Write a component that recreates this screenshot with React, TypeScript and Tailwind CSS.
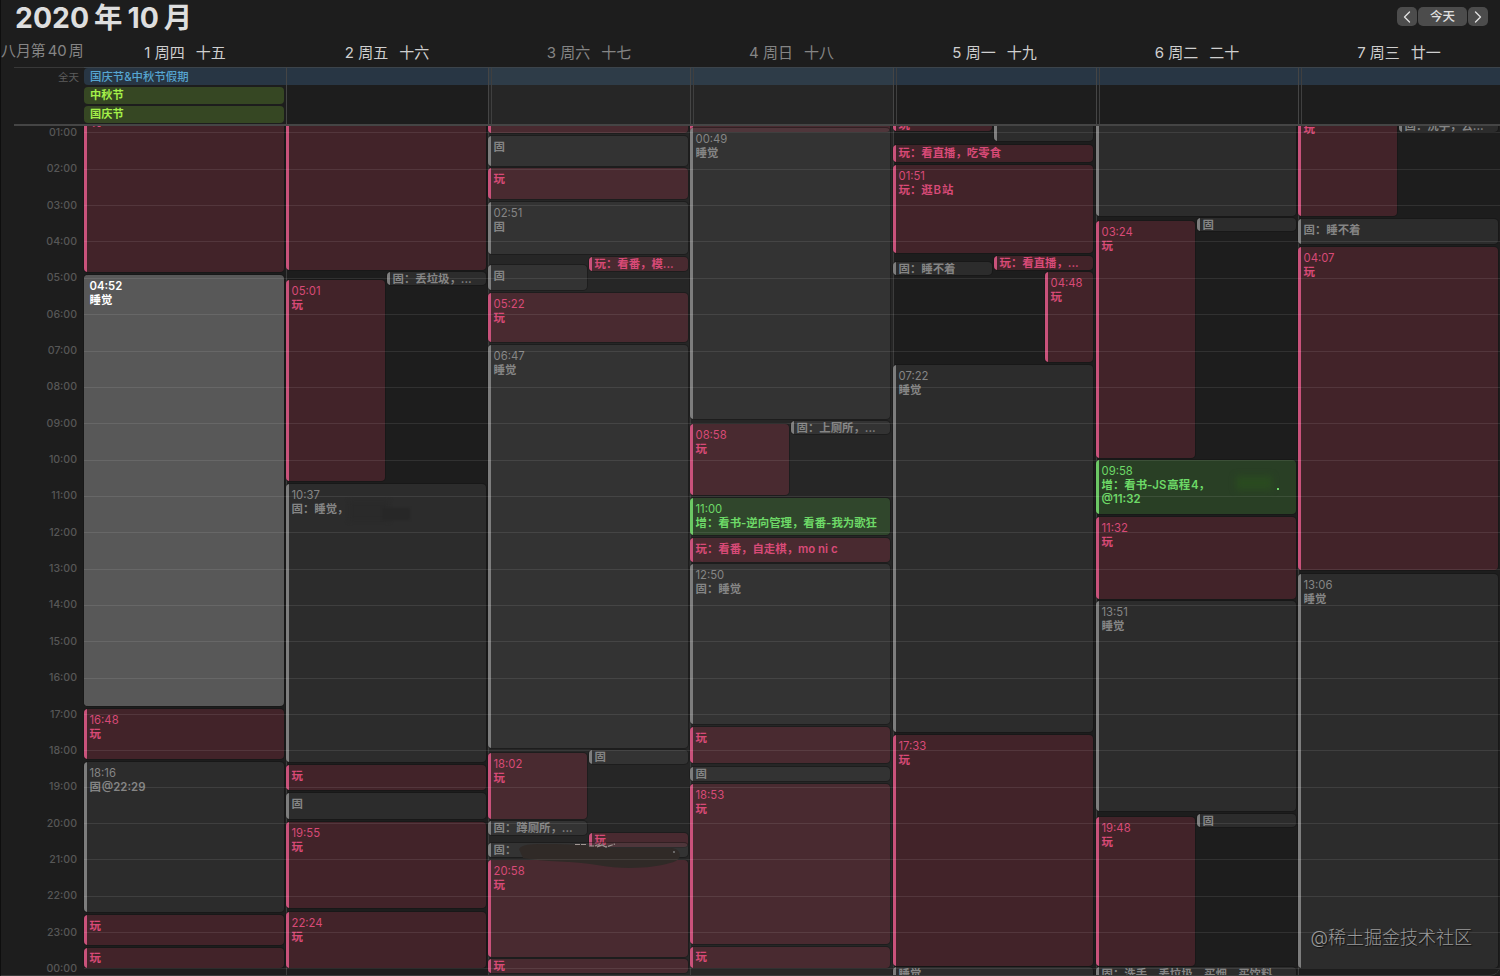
import clsx from "clsx";
import { ChevronLeft, ChevronRight } from "lucide-react";

type Kind = "play" | "fixed" | "grow" | "selected";

interface CalendarEvent {
  kind: Kind;
  top: number;
  bottom: number;
  time?: string;
  title?: string;
  extra?: string;
  left?: number;
  width?: number;
}

interface Day {
  label: string;
  lunar: string;
  weekend?: boolean;
  events: CalendarEvent[];
}

const HOUR_HEIGHT = 36.35;
const FIRST_HOUR_TOP = 6.4;

const LEFT = { left: 0, width: 99 };
const RIGHT = { left: 101, width: 99 };

const COLUMNS = "grid grid-cols-[84px_202px_202px_202px_203px_203px_202px_202px]";

const kindStyles: Record<Kind, { box: string; bar: string; text: string }> = {
  play: { box: "bg-[#c83c55]/22", bar: "bg-[#c9527b]", text: "text-[#d84a77]" },
  fixed: { box: "bg-[#666666]/22", bar: "bg-[#7d7d7d]", text: "text-[#858585]" },
  grow: { box: "bg-[#58bc46]/22", bar: "bg-[#6cc765]", text: "text-[#6dd967]" },
  selected: { box: "bg-[#585858]", bar: "bg-[#585858]", text: "text-white" },
};

// top and bottom are pixels from the top edge of the visible time grid
const days: Day[] = [
  {
    label: "1 周四",
    lunar: "十五",
    events: [
      { kind: "play", top: -15, bottom: 146, title: "玩" },
      { kind: "selected", top: 149, bottom: 580, time: "04:52", title: "睡觉" },
      { kind: "play", top: 583, bottom: 633, time: "16:48", title: "玩" },
      { kind: "fixed", top: 636, bottom: 786, time: "18:16", title: "固\u200A@22:29" },
      { kind: "play", top: 789, bottom: 819, title: "玩" },
      { kind: "play", top: 822, bottom: 842, title: "玩" },
    ],
  },
  {
    label: "2 周五",
    lunar: "十六",
    events: [
      { kind: "play", top: -60, bottom: 144 },
      { kind: "fixed", top: 146, bottom: 159, title: "固：丢垃圾，...", ...RIGHT },
      { kind: "play", top: 154, bottom: 355, time: "05:01", title: "玩", ...LEFT },
      { kind: "fixed", top: 358, bottom: 636, time: "10:37", title: "固：睡觉，" },
      { kind: "play", top: 639, bottom: 664, title: "玩" },
      { kind: "fixed", top: 667, bottom: 693, title: "固" },
      { kind: "play", top: 696, bottom: 782, time: "19:55", title: "玩" },
      { kind: "play", top: 786, bottom: 842, time: "22:24", title: "玩" },
    ],
  },
  {
    label: "3 周六",
    lunar: "十七",
    weekend: true,
    events: [
      { kind: "play", top: -60, bottom: 7 },
      { kind: "fixed", top: 10, bottom: 40, title: "固" },
      { kind: "play", top: 42, bottom: 73, title: "玩" },
      { kind: "fixed", top: 76, bottom: 128, time: "02:51", title: "固" },
      { kind: "play", top: 131, bottom: 145, title: "玩：看番，模...", ...RIGHT },
      { kind: "fixed", top: 139, bottom: 164, title: "固", ...LEFT },
      { kind: "play", top: 167, bottom: 216, time: "05:22", title: "玩" },
      { kind: "fixed", top: 219, bottom: 622, time: "06:47", title: "睡觉" },
      { kind: "play", top: 627, bottom: 693, time: "18:02", title: "玩", ...LEFT },
      { kind: "fixed", top: 624, bottom: 638, title: "固", ...RIGHT },
      { kind: "fixed", top: 695, bottom: 709, title: "固：蹲厕所，...", ...LEFT },
      { kind: "play", top: 707, bottom: 721, title: "玩", ...RIGHT },
      { kind: "fixed", top: 717, bottom: 731, title: "固：" },
      { kind: "play", top: 734, bottom: 831, time: "20:58", title: "玩" },
      { kind: "play", top: 833, bottom: 847, title: "玩" },
    ],
  },
  {
    label: "4 周日",
    lunar: "十八",
    weekend: true,
    events: [
      { kind: "play", top: -60, bottom: 6 },
      { kind: "fixed", top: 2, bottom: 293, time: "00:49", title: "睡觉" },
      { kind: "play", top: 298, bottom: 369, time: "08:58", title: "玩", ...LEFT },
      { kind: "fixed", top: 295, bottom: 308, title: "固：上厕所，...", ...RIGHT },
      { kind: "grow", top: 372, bottom: 409, time: "11:00", title: "增：看书-逆向管理，看番-我为歌狂" },
      { kind: "play", top: 412, bottom: 436, title: "玩：看番，自走棋，mo ni c" },
      { kind: "fixed", top: 438, bottom: 598, time: "12:50", title: "固：睡觉" },
      { kind: "play", top: 601, bottom: 637, title: "玩" },
      { kind: "fixed", top: 641, bottom: 655, title: "固" },
      { kind: "play", top: 658, bottom: 818, time: "18:53", title: "玩" },
      { kind: "play", top: 821, bottom: 842, title: "玩" },
    ],
  },
  {
    label: "5 周一",
    lunar: "十九",
    events: [
      { kind: "play", top: -8, bottom: 5, title: "玩", ...LEFT },
      { kind: "fixed", top: -40, bottom: 15, ...RIGHT },
      { kind: "play", top: 19, bottom: 36, title: "玩：看直播，吃零食" },
      { kind: "play", top: 39, bottom: 127, time: "01:51", title: "玩：逛\u200AB\u200A站" },
      { kind: "fixed", top: 136, bottom: 149, title: "固：睡不着", ...LEFT },
      { kind: "play", top: 130, bottom: 144, title: "玩：看直播，...", ...RIGHT },
      { kind: "play", top: 146, bottom: 236, time: "04:48", title: "玩", left: 152, width: 48 },
      { kind: "fixed", top: 239, bottom: 606, time: "07:22", title: "睡觉" },
      { kind: "play", top: 609, bottom: 840, time: "17:33", title: "玩" },
      { kind: "fixed", top: 841, bottom: 855, title: "睡觉" },
    ],
  },
  {
    label: "6 周二",
    lunar: "二十",
    events: [
      { kind: "fixed", top: -60, bottom: 90 },
      { kind: "play", top: 95, bottom: 332, time: "03:24", title: "玩", ...LEFT },
      { kind: "fixed", top: 92, bottom: 105, title: "固", ...RIGHT },
      { kind: "grow", top: 334, bottom: 388, time: "09:58", title: "增：看书-JS\u200A高程\u200A4，", extra: "@11:32" },
      { kind: "play", top: 391, bottom: 473, time: "11:32", title: "玩" },
      { kind: "fixed", top: 475, bottom: 685, time: "13:51", title: "睡觉" },
      { kind: "fixed", top: 688, bottom: 701, title: "固", ...RIGHT },
      { kind: "play", top: 691, bottom: 840, time: "19:48", title: "玩", ...LEFT },
      { kind: "fixed", top: 841, bottom: 855, title: "固：洗手，丢垃圾，买烟，买饮料" },
    ],
  },
  {
    label: "7 周三",
    lunar: "廿一",
    events: [
      { kind: "play", top: -8, bottom: 90, title: "玩", ...LEFT },
      { kind: "fixed", top: -7, bottom: 6, title: "固：洗手，去...", ...RIGHT },
      { kind: "fixed", top: 93, bottom: 118, title: "固：睡不着" },
      { kind: "play", top: 121, bottom: 444, time: "04:07", title: "玩" },
      { kind: "fixed", top: 448, bottom: 842, time: "13:06", title: "睡觉" },
    ],
  },
];

const hours = Array.from({ length: 24 }, (_, i) => `${String((i + 1) % 24).padStart(2, "0")}:00`);

function EventBlock({ event }: { event: CalendarEvent }) {
  const { kind, top, bottom, time, title, extra, left = 0, width = 200 } = event;
  const height = bottom - top;
  const style = kindStyles[kind];

  return (
    <div
      className={clsx(
        "absolute overflow-hidden rounded-[4px] pl-[5.5px] text-[11.4px] leading-[14px] whitespace-nowrap shadow-[0_0_0_1px_rgba(18,18,18,0.4)]",
        style.box,
        style.text,
        time || height > 22 ? "pt-[4px]" : height > 17 ? "pt-[3px]" : height > 15 ? "pt-[1px]" : "pt-0",
      )}
      style={{ top, height, left, width }}
    >
      <span className={clsx("absolute inset-y-0 left-0 w-[3px]", style.bar)} />
      {time && (
        <div className={clsx("text-[11.3px]", kind === "selected" ? "font-semibold" : "font-normal")}>{time}</div>
      )}
      {title && <div className={kind === "selected" ? "font-bold" : "font-semibold"}>{title}</div>}
      {extra && <div className="font-semibold">{extra}</div>}
    </div>
  );
}

function Toolbar() {
  return (
    <header className="flex h-[35px] items-start justify-between pr-[12px] pl-[15px]">
      <h1 className="flex items-center gap-[5px] text-[28.4px] leading-[35px] font-bold text-[#dedede]">
        <span>2020</span>
        <span>年</span>
        <span>10</span>
        <span>月</span>
      </h1>
      <div className="flex gap-[1px] pt-[7px] text-[#e0e0e0]">
        <button className="flex h-[19px] w-[20px] items-center justify-center rounded-[5px] bg-[#4c4c4c]">
          <ChevronLeft size={20} strokeWidth={1.6} />
        </button>
        <button className="h-[19px] w-[49px] rounded-[5px] bg-[#4c4c4c] text-[12.5px] leading-[18px] font-medium">
          今天
        </button>
        <button className="flex h-[19px] w-[20px] items-center justify-center rounded-[5px] bg-[#4c4c4c]">
          <ChevronRight size={20} strokeWidth={1.6} />
        </button>
      </div>
    </header>
  );
}

function DayHeader() {
  return (
    <div className={clsx(COLUMNS, "h-[32px] text-[15px] leading-[35px]")}>
      <div className="pl-[1px] text-[14.9px] leading-[33px] whitespace-nowrap text-[#858585]">
        八月第<span className="mx-[2px]">40</span>周
      </div>
      {days.map((day) => (
        <div
          key={day.label}
          className={clsx("flex justify-center gap-[11px]", day.weekend ? "text-[#858585]" : "text-[#cfcfcf]")}
        >
          <span>{day.label}</span>
          <span>{day.lunar}</span>
        </div>
      ))}
    </div>
  );
}

function AllDayRow() {
  return (
    <div className={clsx(COLUMNS, "h-[57px]")}>
      <div className="ml-[14px] border-t border-[#383838] pr-[5px] text-right text-[10.5px] leading-[19px] text-[#5c5c5c]">
        全天
      </div>
      {days.map((day, i) => (
        <div
          key={day.label}
          className={clsx(
            "flex flex-col gap-[2px] border-t border-[#3c444b] text-[11.2px] leading-[17px] font-semibold",
            day.weekend ? "bg-[#262626]" : "bg-[#1d1d1d]",
            i > 0 && "border-l border-l-[#454545]",
          )}
        >
          <div
            className={clsx(
              "h-[17px] pl-[6px] text-[11.4px] leading-[18px] font-medium whitespace-nowrap text-[#56a5d0]",
              day.weekend ? "bg-[#2e3c48]" : "bg-[#283644]",
              i === 0 && "rounded-l-[4px]",
            )}
          >
            {i === 0 && "国庆节&中秋节假期"}
          </div>
          {i === 0 && (
            <>
              <div className="h-[17px] w-[200px] rounded-[4px] bg-[#364723] pl-[6px] text-[#a4ef49]">中秋节</div>
              <div className="h-[17px] w-[200px] rounded-[4px] bg-[#364723] pl-[6px] text-[#a4ef49]">国庆节</div>
            </>
          )}
          {i > 1 && <div className="-mt-[19px] ml-[2px] flex-1 border-l border-[#3f3f3f]" />}
        </div>
      ))}
    </div>
  );
}

function TimeGrid() {
  return (
    <div className={clsx(COLUMNS, "relative h-[850px] overflow-hidden")}>
      <div className="pr-[7px] text-right text-[10.6px] font-medium text-[#575757]">
        <div className="-mt-[11px]">
          {hours.map((hour) => (
            <div key={hour} className="h-[36.35px] leading-[36.35px]">
              {hour}
            </div>
          ))}
        </div>
      </div>
      {days.map((day, i) => (
        <div
          key={day.label}
          className={clsx(
            "relative",
            day.weekend ? "bg-[#262626]" : "bg-[#1d1d1d]",
            i > 0 && "shadow-[inset_1px_0_0_#3c3c3c]",
          )}
        >
          {day.events.map((event, n) => (
            <EventBlock key={n} event={event} />
          ))}
          {i === 1 && (
            <>
              <span className="absolute top-[375px] left-[63px] h-[20px] w-[40px] bg-[#2a2a2a] blur-[2px]" />
              <span className="absolute top-[382px] left-[96px] h-[12px] w-[28px] bg-[#272727] blur-[1px]" />
            </>
          )}
          {i === 2 && (
            <svg className="absolute top-[714px] left-[25px]" width="180" height="30" viewBox="0 0 180 30">
              <path
                d="M6 9C10 3 24 4 42 4L70 5L90 8H158C170 9 170 21 157 23C142 28 110 30 84 25C62 21 30 22 10 18Z"
                fill="#302a27"
              />
              <path
                d="M62 4.500h12M76 6h6l2 -1h6M84 7l5 -2 4 2 6 -2 3 -1"
                fill="none"
                stroke="#a09692"
                strokeWidth="1.2"
                strokeDasharray="5 1"
              />
              <circle cx="161" cy="12" r="0.9" fill="#858585" />
            </svg>
          )}
          {i === 5 && (
            <>
              <span className="absolute top-[350px] left-[140px] h-[14px] w-[36px] bg-[#2a4a20] blur-[3px]" />
              <span className="absolute top-[362px] left-[181px] size-[1.5px] bg-[#6dd967]" />
            </>
          )}
        </div>
      ))}
      <div className="pointer-events-none absolute inset-y-0 right-0 left-[84px]">
        {hours.map((hour, i) => (
          <div
            key={hour}
            className="absolute inset-x-0 h-px bg-white/9"
            style={{ top: Math.round(FIRST_HOUR_TOP + i * HOUR_HEIGHT) }}
          />
        ))}
      </div>
      <div className="absolute top-[800px] right-[28px] text-[18px] leading-[24px] font-light text-[#9a9a9a] [text-shadow:1px_1px_1px_#111]">
        @稀土掘金技术社区
      </div>
    </div>
  );
}

export default function App() {
  return (
    <div className="relative h-[976px] w-[1500px] overflow-hidden bg-[#1d1d1d] font-['Inter','Noto_Sans_CJK_SC',sans-serif]">
      <Toolbar />
      <DayHeader />
      <AllDayRow />
      <div className="ml-[14px] h-[2px] bg-[#454545]" />
      <TimeGrid />
      <div className="pointer-events-none absolute inset-0 rounded-br-[10px] border-b border-l border-b-[#3a3a3a] border-l-[#0e0e0e]" />
    </div>
  );
}
